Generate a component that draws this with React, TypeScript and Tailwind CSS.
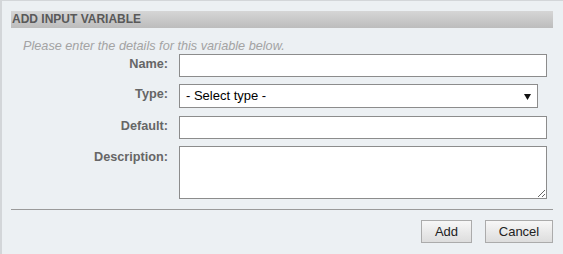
export default function App() {
  const label = 'text-right text-[12.7px] font-bold text-[#666] leading-[14px] pt-[3px]'
  const field = 'h-[23px] w-[368px] border border-[#8c8c8c] bg-white px-[6px] text-[13px] text-black outline-none'

  return (
    <div className="w-[563px] h-[254px] overflow-hidden bg-[#ecf0f3] border-t border-l-2 border-[#d3d6d9] font-['Liberation_Sans',Arial,sans-serif]">
      <div className="pl-[9px] pr-[10px] pt-[10px]">
        <div className="h-[17px] bg-gradient-to-b from-[#d6d6d6] to-[#bcbcbc] text-[12px] font-bold leading-[17px] text-[#595959] pl-[1px]">
          ADD INPUT VARIABLE
        </div>
        <p className="mt-[11px] pl-[12px] text-[12.7px] italic leading-[14px] text-[#a3a3a3]">
          Please enter the details for this variable below.
        </p>

        <div className="mt-[1px] grid grid-cols-[157px_1fr] gap-x-[11px] gap-y-[7px]">
          <label className={label}>Name:</label>
          <input className={field} />

          <label className={label}>Type:</label>
          <div className="relative mb-[1px] w-[359px] h-[24px] border border-[#8c8c8c] bg-white">
            <div className="px-[6px] text-[13px] leading-[22px] text-black">- Select type -</div>
            <svg className="absolute right-[6px] top-[9px]" width="7" height="6" viewBox="0 0 7 6">
              <polygon points="0,0 7,0 3.5,6" fill="#111" />
            </svg>
          </div>

          <label className={label}>Default:</label>
          <input className={field} />

          <label className={`${label} pt-[4px]`}>Description:</label>
          <textarea className="h-[53px] w-[368px] border border-[#8c8c8c] bg-white px-[6px] text-[13px] outline-none block" />
        </div>

        <div className="mt-[10px] h-px bg-[#9a9a9a]" />

        <div className="mt-[10px] flex justify-end gap-[13px]">
          <button className="h-[23px] w-[51px] border border-[#ababab] bg-gradient-to-b from-[#f7f7f7] to-[#dddddd] text-[13px] text-[#222]">Add</button>
          <button className="h-[23px] w-[68px] border border-[#ababab] bg-gradient-to-b from-[#f7f7f7] to-[#dddddd] text-[13px] text-[#222]">Cancel</button>
        </div>
      </div>
    </div>
  )
}
